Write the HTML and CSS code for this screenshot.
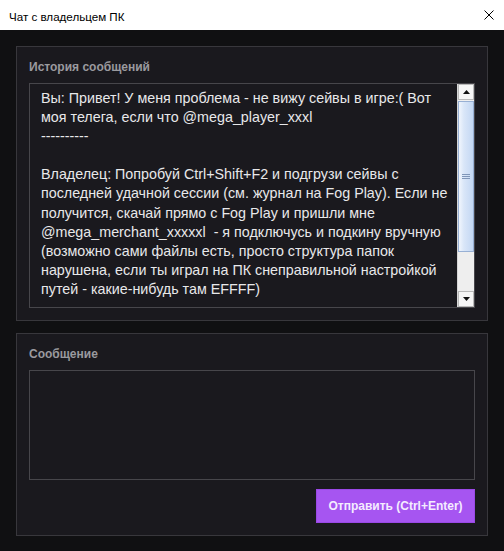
FILE: index.html
```html
<!DOCTYPE html>
<html lang="ru">
<head>
<meta charset="utf-8">
<title>Чат с владельцем ПК</title>
<link rel="stylesheet" href="styles.css">
</head>
<body>
<div class="titlebar">
  <span class="title">Чат с владельцем ПК</span>
  <svg class="close" width="10" height="10" viewBox="0 0 10 10"><path d="M0.5 0.5 L9.5 9.5 M9.5 0.5 L0.5 9.5" stroke="#000" stroke-width="1" fill="none"/></svg>
</div>
<main class="content">
  <section class="panel panel-history">
    <div class="label">История сообщений</div>
    <div class="history">
      <div class="viewport">
        <div class="text">Вы: Привет! У меня проблема - не вижу сейвы в игре:( Вот
моя телега, если что @mega_player_xxxl
----------

Владелец: Попробуй Ctrl+Shift+F2 и подгрузи сейвы с
последней удачной сессии (см. журнал на Fog Play). Если не
получится, скачай прямо с Fog Play и пришли мне
@mega_merchant_xxxxxl  - я подключусь и подкину вручную
(возможно сами файлы есть, просто структура папок
нарушена, если ты играл на ПК снеправильной настройкой
путей - какие-нибудь там EFFFF)</div>
      </div>
      <div class="scrollbar">
        <div class="sb-btn"><svg width="7" height="4" viewBox="0 0 7 4"><path d="M3.5 0 L7 4 L0 4 Z" fill="#111"/></svg></div>
        <div class="sb-thumb"><span class="grip"></span></div>
        <div class="sb-track"></div>
        <div class="sb-btn"><svg width="7" height="4" viewBox="0 0 7 4"><path d="M0 0 L7 0 L3.5 4 Z" fill="#111"/></svg></div>
      </div>
    </div>
  </section>
  <section class="panel panel-message">
    <div class="label">Сообщение</div>
    <div class="input"></div>
    <div class="actions">
      <button class="send">Отправить (Ctrl+Enter)</button>
    </div>
  </section>
</main>
</body>
</html>
```
FILE: styles.css
```css
* { box-sizing: border-box; }
html, body { margin: 0; padding: 0; }
body {
  width: 504px;
  height: 551px;
  background: #101012;
  font-family: "Liberation Sans", Arial, sans-serif;
  overflow: hidden;
}
.titlebar {
  height: 30px;
  background: #ffffff;
  display: flex;
  align-items: center;
  justify-content: space-between;
  padding: 0 10px 0 9px;
}
.title {
  font-size: 11.6px;
  color: #000;
  position: relative;
  top: 1px;
}
.close { display: block; }
.content {
  padding: 16px 16px 0 16px;
  display: flex;
  flex-direction: column;
  gap: 12px;
}
.panel {
  background: #1a191e;
  border: 1px solid #38373c;
  padding: 12px 12px 12px 12px;
  display: flex;
  flex-direction: column;
}
.label {
  font-size: 12px;
  font-weight: bold;
  line-height: 16px;
  color: #9a9a9f;
  margin-bottom: 8px;
}
.history {
  height: 225px;
  border: 1px solid #47464b;
  background: #1a191e;
  display: flex;
}
.viewport {
  flex: 1;
  min-width: 0;
  padding: 5px 0 0 11px;
  overflow: hidden;
}
.text {
  white-space: pre;
  font-size: 14.3px;
  line-height: 19.1px;
  color: #e8e8ea;
}
.scrollbar {
  width: 17px;
  flex: none;
  display: flex;
  flex-direction: column;
  background: #efefef;
  border-left: 1px solid #d6d6d6;
}
.sb-btn {
  height: 16px;
  background: #f6f6f6;
  border: 1px solid #b9b9b9;
  display: flex;
  align-items: center;
  justify-content: center;
}
.sb-thumb {
  height: 151px;
  margin: 1px 0 0 0;
  border: 1px solid #98b0d4;
  background: linear-gradient(to right, #f1f6fd 0%, #d9e6f8 35%, #c3d7f3 100%);
  display: flex;
  align-items: center;
  justify-content: center;
}
.grip {
  width: 8px;
  height: 5px;
  border-top: 1px solid #7f96b8;
  border-bottom: 1px solid #7f96b8;
  position: relative;
}
.grip::after {
  content: "";
  position: absolute;
  left: 0;
  right: 0;
  top: 1px;
  border-top: 1px solid #7f96b8;
}
.sb-track {
  flex: 1;
  background: #eeeeee;
}
.input {
  height: 110px;
  border: 1px solid #47464b;
  background: #1a191e;
}
.actions {
  display: flex;
  justify-content: flex-end;
  margin-top: 9px;
}
.send {
  width: 159px;
  height: 34px;
  background: #a655f1;
  border: 1px solid #9a48e6;
  color: #f4ecff;
  font-family: "Liberation Sans", Arial, sans-serif;
  font-size: 12px;
  font-weight: bold;
  padding: 0;
  cursor: pointer;
}
```
